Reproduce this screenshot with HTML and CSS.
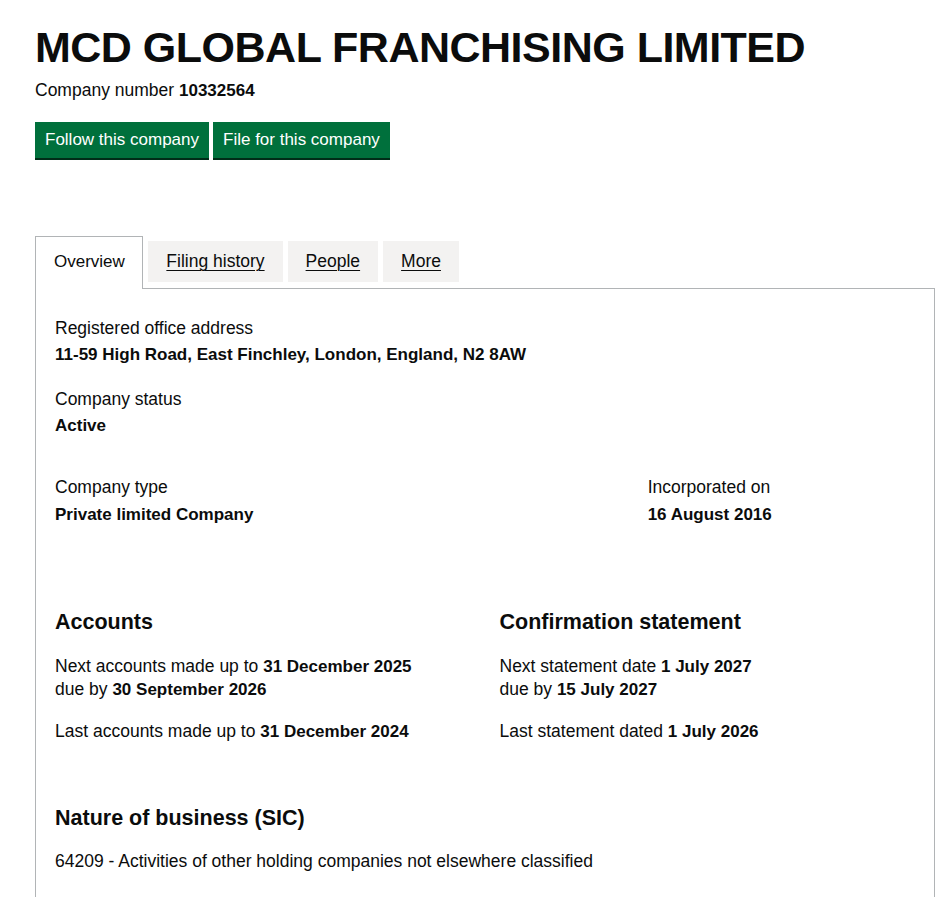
FILE: index.html
```html
<!DOCTYPE html>
<html lang="en">
<head>
<meta charset="utf-8">
<title>MCD GLOBAL FRANCHISING LIMITED</title>
<link rel="stylesheet" href="styles.css">
</head>
<body>
<main class="page">
  <h1 class="title">MCD GLOBAL FRANCHISING LIMITED</h1>
  <p class="company-number">Company number <strong>10332564</strong></p>
  <div class="actions">
    <a class="button" href="#">Follow this company</a>
    <a class="button" href="#">File for this company</a>
  </div>

  <div class="tabs">
    <ul class="tab-list">
      <li class="tab tab-selected"><span class="tab-label">Overview</span></li>
      <li class="tab"><a class="tab-link" href="#">Filing history</a></li>
      <li class="tab"><a class="tab-link" href="#">People</a></li>
      <li class="tab"><a class="tab-link" href="#">More</a></li>
    </ul>
    <div class="panel">
      <dl class="field field-first">
        <dt class="label">Registered office address</dt>
        <dd class="value">11-59 High Road, East Finchley, London, England, N2 8AW</dd>
      </dl>
      <dl class="field field-status">
        <dt class="label">Company status</dt>
        <dd class="value">Active</dd>
      </dl>
      <div class="row row-type">
        <dl class="field col-two-thirds">
          <dt class="label">Company type</dt>
          <dd class="value value-type">Private limited Company</dd>
        </dl>
        <dl class="field col-one-third">
          <dt class="label">Incorporated on</dt>
          <dd class="value value-type">16 August 2016</dd>
        </dl>
      </div>
      <div class="row row-accounts">
        <div class="col-half">
          <h2 class="heading">Accounts</h2>
          <p class="text text-lead">Next accounts made up to <strong>31 December 2025</strong><br>due by <strong>30 September 2026</strong></p>
          <p class="text">Last accounts made up to <strong>31 December 2024</strong></p>
        </div>
        <div class="col-half">
          <h2 class="heading">Confirmation statement</h2>
          <p class="text text-lead">Next statement date <strong>1 July 2027</strong><br>due by <strong>15 July 2027</strong></p>
          <p class="text">Last statement dated <strong>1 July 2026</strong></p>
        </div>
      </div>
      <h2 class="heading heading-sic">Nature of business (SIC)</h2>
      <p class="text text-sic">64209 - Activities of other holding companies not elsewhere classified</p>
    </div>
  </div>
</main>
</body>
</html>
```

FILE: styles.css
```css
* { box-sizing: border-box; }

html, body {
  margin: 0;
  padding: 0;
  background: #ffffff;
}

body {
  font-family: "Liberation Sans", Arial, sans-serif;
  font-size: 17.5px;
  line-height: 22px;
  color: #0b0c0c;
}

strong {
  font-weight: 700;
  font-size: 17px;
  line-height: 1;
}

.page {
  padding: 22px 3px 0 35px;
}

.title {
  margin: 0;
  font-size: 43px;
  line-height: 50px;
  font-weight: 700;
  letter-spacing: -0.5px;
}

.company-number {
  margin: 7px 0 0;
}

.actions {
  display: flex;
  gap: 4px;
  margin-top: 21px;
  margin-bottom: 78px;
}

.button {
  display: inline-block;
  background: #00703c;
  color: #ffffff;
  text-decoration: none;
  font-size: 17px;
  padding: 7px 10px 8px;
  line-height: 21px;
  box-shadow: 0 2px 0 #002d18;
}

.tab-list {
  display: flex;
  align-items: flex-start;
  list-style: none;
  margin: 0;
  padding: 0;
  height: 52px;
}

.tab {
  margin-top: 5px;
  margin-right: 5px;
  padding: 10px 18px;
  line-height: 21px;
  background: #f3f2f1;
}

.tab-selected {
  position: relative;
  margin-top: 0;
  padding: 14px 17.5px 17px 18px;
  background: #ffffff;
  border: 1px solid #b1b4b6;
  border-bottom: 0;
}

.tab-label {
  font-size: 17px;
}

.tab-link {
  color: #0b0c0c;
  text-decoration: underline;
  text-decoration-thickness: 1px;
  text-underline-offset: 3px;
}

.panel {
  border: 1px solid #b1b4b6;
  border-bottom: 0;
  padding: 28px 20px 40px 19px;
}

.field {
  margin: 0;
}

.label {
  margin: 0;
}

.value {
  margin: 5px 0 0;
  font-weight: 700;
  font-size: 17px;
}

.value-type { margin-top: 6px; }

.field-status { margin-top: 22px; }

.row {
  display: flex;
  margin-left: -15px;
  margin-right: -15px;
}

.row-type { margin-top: 39px; }
.row-accounts { margin-top: 83px; }

.col-two-thirds { width: 66.6667%; padding: 0 15px; }
.col-one-third { width: 33.3333%; padding: 0 15px; }
.col-half { width: 50%; padding: 0 15px; }

.heading {
  margin: 0;
  font-size: 21.5px;
  line-height: 26px;
  font-weight: 700;
}

.heading-sic { margin-top: 62px; }

.text {
  margin: 19px 0 0;
  line-height: 23px;
}

.text-lead { margin-top: 20px; }

.text-sic { margin-top: 19px; }
```
